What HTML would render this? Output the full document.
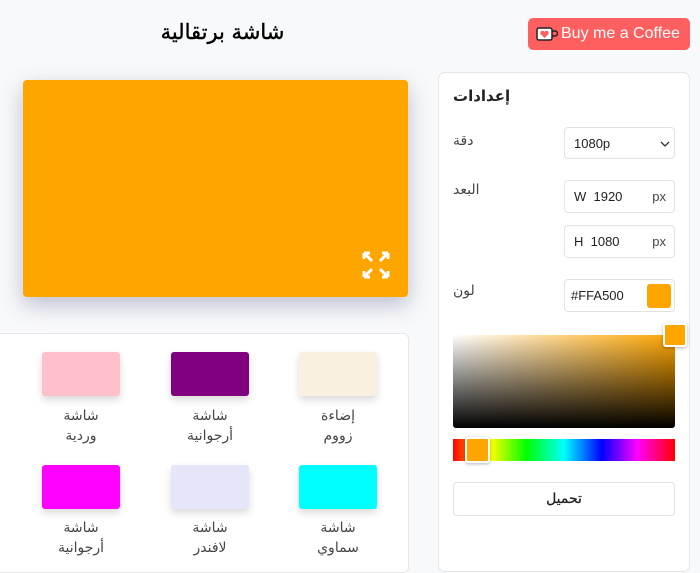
<!DOCTYPE html>
<html><head><meta charset="utf-8"><style>
*{box-sizing:border-box;margin:0;padding:0}
body{width:700px;height:559px;overflow:hidden;background:#f8f9fa;font-family:"Liberation Sans","Noto Sans CJK SC",sans-serif;position:relative;color:#222}
.a{position:absolute}
.title{left:120px;top:20px;width:205px;text-align:center;font-size:21px;color:#000;font-family:"DejaVu Sans",sans-serif;-webkit-text-stroke:0.4px #000}
.coffee{left:528px;top:18px;width:162px;height:32px;background:#ff5f5f;border-radius:5px;color:#fff;font-size:16px;line-height:32px;padding-left:33px;white-space:nowrap}
.preview{left:23px;top:80px;width:385px;height:217px;background:#FFA500;border-radius:4px;box-shadow:0 8px 22px rgba(80,80,130,.35)}
.grid{left:-10px;top:333px;width:419px;height:240px;background:#fff;border:1px solid #e6e6e6;border-radius:6px}
.sw{width:78px;height:44px;border-radius:3px;box-shadow:0 4px 8px rgba(0,0,0,.15)}
.lb{width:100px;text-align:center;font-size:14px;line-height:20px;color:#444;font-family:"DejaVu Sans",sans-serif}
.card{left:438px;top:72px;width:252px;height:500px;background:#fff;border:1px solid #e6e6e6;border-radius:7px}
.lab{font-size:14px;color:#444;font-family:"DejaVu Sans",sans-serif}
.inp{left:564px;width:111px;border:1px solid #e2e2e2;border-radius:4px;background:#fff;font-size:13px;color:#222;padding-left:9px;line-height:32px}
</style></head><body>
<div class="a title">شاشة برتقالية</div>
<div class="a coffee"><svg class="a" style="left:8px;top:9px" width="22" height="15" viewBox="0 0 22 15"><rect x="1" y="1" width="15" height="12" rx="2" fill="#fff" stroke="#222" stroke-width="1.5"/><path d="M16 4h3a2 2 0 0 1 0 5h-3" fill="none" stroke="#222" stroke-width="1.5"/><path d="M8.5 11 4.5 7a2 2 0 0 1 4-2 2 2 0 0 1 4 2z" fill="#ff5f5f"/></svg>Buy me a Coffee</div>
<div class="a preview"><svg class="a" style="left:338px;top:170px" width="30" height="30" viewBox="0 0 30 30" fill="none" stroke="#fff" stroke-width="3"><path d="M3 3l8 8M3 3h6M3 3v6M27 3l-8 8M27 3h-6M27 3v6M3 27l8-8M3 27h6M3 27v-6M27 27l-8-8M27 27h-6M27 27v-6"/></svg></div>
<div class="a" style="left:0;top:345px;width:1px;height:100px;background:#ddd"></div>
<div class="a grid"></div>
<div class="a sw" style="left:42px;top:352px;background:#ffc0cb"></div>
<div class="a sw" style="left:171px;top:352px;background:#800080"></div>
<div class="a sw" style="left:299px;top:352px;background:#faf0e1"></div>
<div class="a sw" style="left:42px;top:465px;background:#ff00ff"></div>
<div class="a sw" style="left:171px;top:465px;background:#e6e6fa"></div>
<div class="a sw" style="left:299px;top:465px;background:#00ffff"></div>
<div class="a lb" style="left:31px;top:406px">شاشة<br>وردية</div>
<div class="a lb" style="left:160px;top:406px">شاشة<br>أرجوانية</div>
<div class="a lb" style="left:288px;top:406px">إضاءة<br>زووم</div>
<div class="a lb" style="left:31px;top:518px">شاشة<br>أرجوانية</div>
<div class="a lb" style="left:160px;top:518px">شاشة<br>لافندر</div>
<div class="a lb" style="left:288px;top:518px">شاشة<br>سماوي</div>
<div class="a card"></div>
<div class="a lab" style="left:453px;top:87px;font-weight:bold;font-size:15px;color:#222">إعدادات</div>
<div class="a lab" style="left:453px;top:133px">دقة</div>
<div class="a lab" style="left:453px;top:182px">البعد</div>
<div class="a lab" style="left:453px;top:283px">لون</div>
<div class="a inp" style="top:127px;height:32px">1080p<svg class="a" style="left:95px;top:13px" width="10" height="6" viewBox="0 0 10 6"><path d="M1 1l4 4 4-4" fill="none" stroke="#333" stroke-width="1.3"/></svg></div>
<div class="a inp" style="top:180px;height:33px">W&nbsp; 1920<span class="a" style="right:8px;top:0;color:#444">px</span></div>
<div class="a inp" style="top:225px;height:33px">H&nbsp; 1080<span class="a" style="right:8px;top:0;color:#444">px</span></div>
<div class="a inp" style="top:279px;height:33px;padding-left:6px">#FFA500<div class="a" style="left:82px;top:4px;width:24px;height:24px;background:#FFA500;border-radius:3px"></div></div>
<div class="a" style="left:453px;top:335px;width:222px;height:93px;border-radius:3px;background:linear-gradient(to bottom,rgba(0,0,0,0),#000),linear-gradient(to right,#fff,#FFA500)"></div>
<div class="a" style="left:663px;top:323px;width:24px;height:24px;background:#FFA500;border:2px solid #fff;border-radius:3px;box-shadow:0 1px 3px rgba(0,0,0,.3)"></div>
<div class="a" style="left:453px;top:439px;width:222px;height:22px;background:linear-gradient(to right,#f00,#ff0 17%,#0f0 33%,#0ff 50%,#00f 67%,#f0f 83%,#f00)"></div>
<div class="a" style="left:465px;top:437px;width:25px;height:26px;background:#FFA500;border:2px solid #fff;border-radius:3px;box-shadow:0 1px 3px rgba(0,0,0,.3)"></div>
<div class="a" style="left:453px;top:482px;width:222px;height:34px;border:1px solid #e2e2e2;border-radius:4px;text-align:center;line-height:32px;font-size:14px;font-family:'DejaVu Sans',sans-serif;color:#222;-webkit-text-stroke:0.3px #222">تحميل</div>
</body></html>
